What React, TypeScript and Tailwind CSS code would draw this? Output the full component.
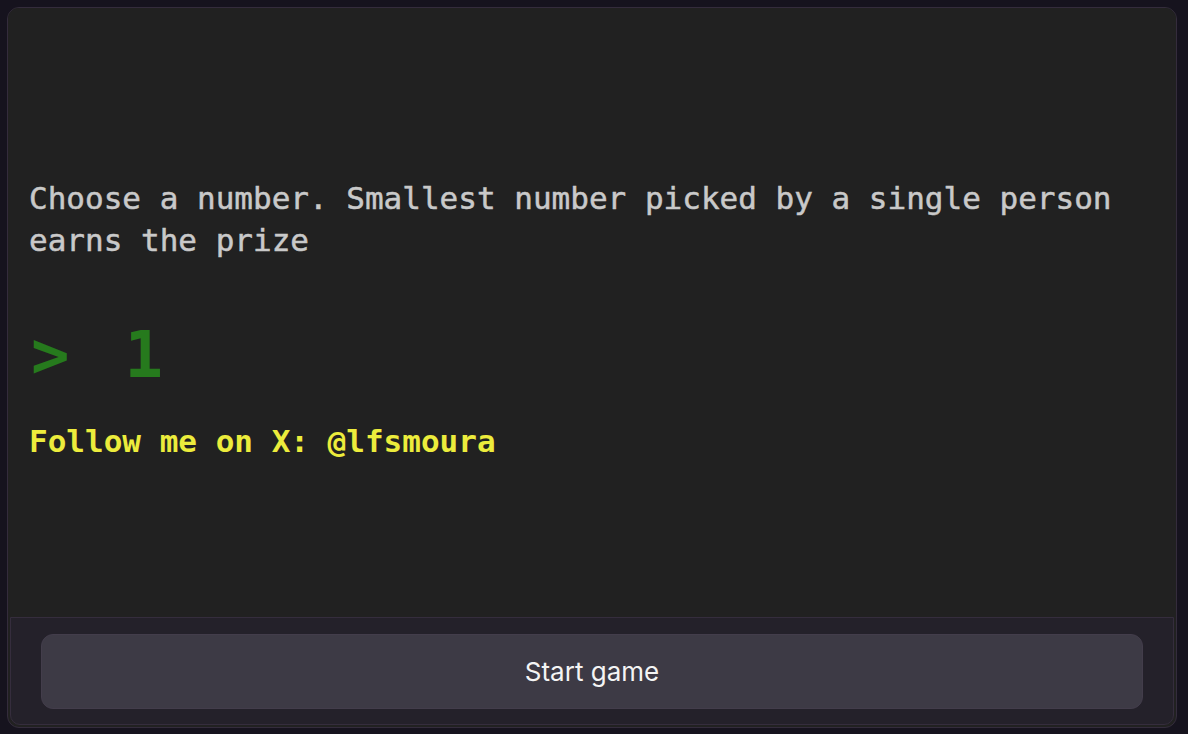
import React from "react";

export default function App() {
  return (
    <div className="w-[1188px] h-[734px] bg-[#16131e] p-[7px] overflow-hidden">
      <div className="w-[1170px] h-[721px] rounded-[12px] border border-[#342c3c] bg-[#212121] flex flex-col overflow-hidden">
        <div className="h-[609px] shrink-0 pl-[21px] pr-[21px] pt-[169px] bg-[#212121] text-[31px]" style={{ fontFamily: '"DejaVu Sans Mono", "Liberation Mono", monospace' }}>
          <p className="leading-[42px] text-[#c9c9c9] [-webkit-text-stroke:0.5px_#c9c9c9]">
            Choose a number. Smallest number picked by a single person earns the prize
          </p>
          <div className="mt-[62px] h-[64px] flex items-center text-[64px] font-bold text-[#267a1d] leading-[64px]">
            <span className="ml-[2px]">&gt;</span>
            <span className="ml-[55px]">1</span>
          </div>
          <p className="mt-[33px] leading-[42px] font-bold text-[#ecec3c]">
            Follow me on X: @lfsmoura
          </p>
        </div>
        <div className="flex-1 mx-[2px] mb-[2px] border border-[#352d3d] rounded-b-[10px] bg-[#24212a] px-[30px] pt-[16px]">
          <button className="w-full h-[75px] rounded-[12px] bg-[#3d3a45] border border-[#433d4b] text-[26px] text-[#f4f4f4] flex items-center justify-center" style={{ fontFamily: 'Inter, "Noto Sans", sans-serif' }}>
            Start game
          </button>
        </div>
      </div>
    </div>
  );
}
